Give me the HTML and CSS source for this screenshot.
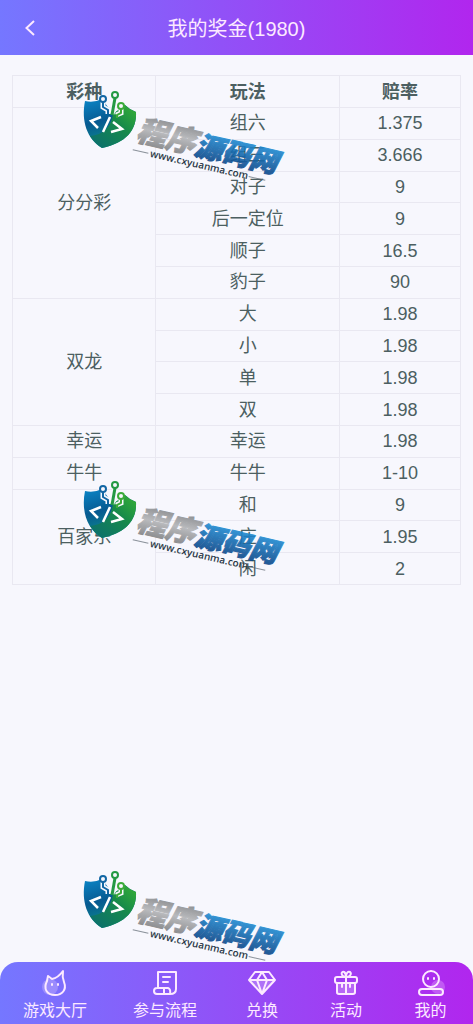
FILE: index.html
```html
<!DOCTYPE html>
<html lang="zh-CN">
<head>
    <meta charset="UTF-8">
    <meta name="viewport" content="width=device-width, initial-scale=1.0">
    <title>我的奖金</title>
    <link rel="stylesheet" href="styles.css">
</head>
<body>
    <header class="header">
        <button class="back-button" type="button" aria-label="返回">
            <svg width="12" height="18" viewBox="0 0 12 18"><path d="M10 2 L2.500 9 L10 16" /></svg>
        </button>
        <h1>我的奖金(1980)</h1>
    </header>

    <main class="content">
        <table class="odds-table">
            <thead>
                <tr><th class="col-type">彩种</th><th class="col-play">玩法</th><th>赔率</th></tr>
            </thead>
            <tbody>
                <tr><td rowspan="6">分分彩</td><td>组六</td><td>1.375</td></tr>
                <tr><td>组三</td><td>3.666</td></tr>
                <tr><td>对子</td><td>9</td></tr>
                <tr><td>后一定位</td><td>9</td></tr>
                <tr><td>顺子</td><td>16.5</td></tr>
                <tr><td>豹子</td><td>90</td></tr>
                <tr><td rowspan="4">双龙</td><td>大</td><td>1.98</td></tr>
                <tr><td>小</td><td>1.98</td></tr>
                <tr><td>单</td><td>1.98</td></tr>
                <tr><td>双</td><td>1.98</td></tr>
                <tr><td>幸运</td><td>幸运</td><td>1.98</td></tr>
                <tr><td>牛牛</td><td>牛牛</td><td>1-10</td></tr>
                <tr><td rowspan="3">百家乐</td><td>和</td><td>9</td></tr>
                <tr><td>庄</td><td>1.95</td></tr>
                <tr><td>闲</td><td>2</td></tr>
            </tbody>
        </table>
    </main>

    <!-- watermark artwork, defined once and stamped three times -->
    <svg class="defs" width="0" height="0" aria-hidden="true">
        <defs>
            <linearGradient id="shieldBlue" x1="0" y1="0" x2="0.300" y2="1">
                <stop offset="0" stop-color="#0a86c8" />
                <stop offset="0.500" stop-color="#075a91" />
                <stop offset="1" stop-color="#0d8f8c" />
            </linearGradient>
            <linearGradient id="shieldGreen" x1="0" y1="1" x2="1" y2="0">
                <stop offset="0" stop-color="#0a6c72" />
                <stop offset="0.600" stop-color="#178a4a" />
                <stop offset="1" stop-color="#37b034" />
            </linearGradient>
            <linearGradient id="silver" x1="0" y1="0" x2="0" y2="1">
                <stop offset="0" stop-color="#77797c" />
                <stop offset="0.500" stop-color="#b9babd" />
                <stop offset="1" stop-color="#7c7d80" />
            </linearGradient>
            <linearGradient id="blueText" x1="0" y1="0" x2="0" y2="1">
                <stop offset="0.200" stop-color="#1f8bd2" />
                <stop offset="0.900" stop-color="#0a4486" />
            </linearGradient>
            <symbol id="brand" viewBox="0 0 210 96">
                <path d="M5 11 Q14 13 22 9 L33 24 L45 15 Q50 20 56 22 C57 40 46 53 22 58 C7 49 1 31 5 11 Z" fill="url(#shieldBlue)" />
                <path d="M33 24 L45 15 Q50 20 56 22 C57 40 46 53 22 58 C17 55 13 51 10 46 Q30 44 33 24 Z" fill="url(#shieldGreen)" />
                <g fill="none" stroke="#f7f7fd" stroke-width="5">
                    <path d="M23 12 V17 L28 20 V24 M35 8 L32 24 M41 19 V23 L36 25" />
                </g>
                <g fill="none" stroke-width="2">
                    <path d="M23 12 V17 L28 20 V24" stroke="#1266a4" />
                    <path d="M35 8 L32 25" stroke="#239943" stroke-width="3" />
                    <path d="M41 19 V23 L37 25 V28" stroke="#3cab39" />
                    <circle cx="23" cy="9" r="3" fill="#f7f7fd" stroke="#1266a4" />
                    <circle cx="35" cy="5" r="3" fill="#f7f7fd" stroke="#239943" />
                    <circle cx="41" cy="16" r="3" fill="#f7f7fd" stroke="#3cab39" />
                </g>
                <path d="M21 27 L11 31 L18 38 M30 27 L23 42 M33 32 L42 39 L31 42" fill="none" stroke="#fff" stroke-width="2.500" />
                <g transform="translate(55 50) rotate(13)">
                    <text class="brand-name" x="0" y="0" fill="url(#silver)" stroke="url(#silver)">程序</text>
                    <text class="brand-name blue" x="60" y="1" fill="url(#blueText)" stroke="url(#blueText)">源码网</text>
                    <path d="M0 10 H16 M119 10 H136" stroke="#5d6670" stroke-opacity="0.700" />
                    <text class="brand-url" x="18" y="13">www.cxyuanma.com</text>
                </g>
            </symbol>
        </defs>
    </svg>
    <div class="watermarks" aria-hidden="true">
        <svg class="mark mark-top"><use href="#brand" /></svg>
        <svg class="mark mark-middle"><use href="#brand" /></svg>
        <svg class="mark mark-bottom"><use href="#brand" /></svg>
    </div>

    <nav class="tabbar">
        <a href="#hall">
            <svg viewBox="0 0 28 28">
                <circle class="glow" cx="9" cy="18" r="8" />
                <path d="M6 12 L7 7 L11 10 Q17 9 22 2 Q21 8 23 13 C26 21 21 26 14 26 C6 26 2 20 6 12 Z" />
                <path d="M11 15 V16 M17 15 V16" />
            </svg>
            <span>游戏大厅</span>
        </a>
        <a href="#flow">
            <svg viewBox="0 0 28 28">
                <path d="M7 19 V3 H25 V20 Q25 25 19 25 H6 Q3 25 3 22 Q3 19 6 19 H17 Q20 20 19 25" />
                <path d="M12 8 H19 M12 13 H17 M13 19 V25" />
            </svg>
            <span>参与流程</span>
        </a>
        <a href="#exchange">
            <svg viewBox="0 0 28 28">
                <path class="glow" d="M1 11 H27 L14 25 Z" />
                <path d="M7 3 H21 L27 11 L14 25 L1 11 Z M1 11 H27 M9 11 L14 25 L19 11 M9 11 L14 3 L19 11" />
            </svg>
            <span>兑换</span>
        </a>
        <a href="#activity">
            <svg viewBox="0 0 28 28">
                <path class="glow" d="M4 15 H24 V25 H4 Z" />
                <rect x="3" y="8" width="22" height="6" rx="2" />
                <path d="M5 14 V23 Q5 25 7 25 H21 Q23 25 23 23 V14 M14 8 V25 M10 14 V18 M18 14 V18 M14 8 C8 7 9 2 12 3 Q14 4 14 8 C14 4 16 2 18 3 C20 5 18 8 14 8" />
            </svg>
            <span>活动</span>
        </a>
        <a href="#mine">
            <svg viewBox="0 0 28 28">
                <circle class="glow" cx="21" cy="18" r="7" />
                <circle cx="14" cy="10" r="8" />
                <path d="M11 9 V10 M17 9 V10" />
                <rect x="2" y="20" width="24" height="6" rx="3" />
            </svg>
            <span>我的</span>
        </a>
    </nav>
</body>
</html>
```
FILE: styles.css
```css
* {
    box-sizing: border-box;
}
body {
    margin: 0;
    min-height: 100vh;
    display: flex;
    flex-direction: column;
    background-color: #f7f7fd;
    color: #4c5f61;
    font-family: "Liberation Sans", "Noto Sans CJK SC", sans-serif;
}
.header {
    display: grid;
    grid-template-columns: 60px 1fr 60px;
    align-items: center;
    height: 55px;
    background: linear-gradient(90deg, #7577ff, #b126ee);
}
.header h1 {
    margin: 0;
    text-align: center;
    font-size: 20px;
    font-weight: normal;
    color: #fce9ff;
}
.back-button {
    display: flex;
    justify-content: center;
    height: 100%;
    align-items: center;
    padding: 0;
    border: none;
    background: none;
    cursor: pointer;
}
.back-button svg {
    fill: none;
    stroke: #fce9ff;
    stroke-width: 2;
}
.content {
    flex: 1;
    padding: 20px 12px;
}
.odds-table {
    width: 100%;
    height: 510px;
    table-layout: fixed;
    border-collapse: collapse;
    font-size: 18px;
    line-height: 24px;
    text-align: center;
}
.odds-table th,
.odds-table td {
    padding: 2px;
    border: 1px solid #e9e8f1;
}
.odds-table th {
    height: 32px;
}
.col-type {
    width: 32%;
}
.col-play {
    width: 41%;
}
.defs {
    position: absolute;
}
.watermarks {
    pointer-events: none;
}
.mark {
    position: absolute;
    left: 80px;
    width: 210px;
    height: 96px;
}
.mark-top {
    top: 90px;
}
.mark-middle {
    top: 480px;
}
.mark-bottom {
    top: 870px;
}
.brand-name {
    font-family: "Noto Sans CJK SC", sans-serif;
    font-size: 30px;
    font-weight: 900;
    font-style: italic;
    stroke-width: 1;
}
.brand-name.blue {
    font-size: 28px;
    opacity: 0.9;
}
.brand-url {
    font-family: "Open Sans", sans-serif;
    font-size: 10px;
    font-weight: 600;
    fill: #2b3947;
}
.tabbar {
    display: grid;
    grid-template-columns: 110fr 110fr 84fr 84fr 85fr;
    height: 62px;
    padding-top: 7px;
    border-radius: 18px 18px 0 0;
    background: linear-gradient(90deg, #7577ff, #b126ee);
}
.tabbar a {
    display: flex;
    flex-direction: column;
    align-items: center;
    gap: 2px;
    color: #fce9ff;
    font-size: 16px;
    line-height: 24px;
    text-decoration: none;
}
.tabbar svg {
    width: 28px;
    height: 28px;
    fill: none;
    stroke: #fce9ff;
    stroke-width: 2;
    stroke-linejoin: round;
    stroke-linecap: round;
}
.tabbar .glow {
    fill: #fce9ff;
    fill-opacity: 0.25;
    stroke: none;
}
```
